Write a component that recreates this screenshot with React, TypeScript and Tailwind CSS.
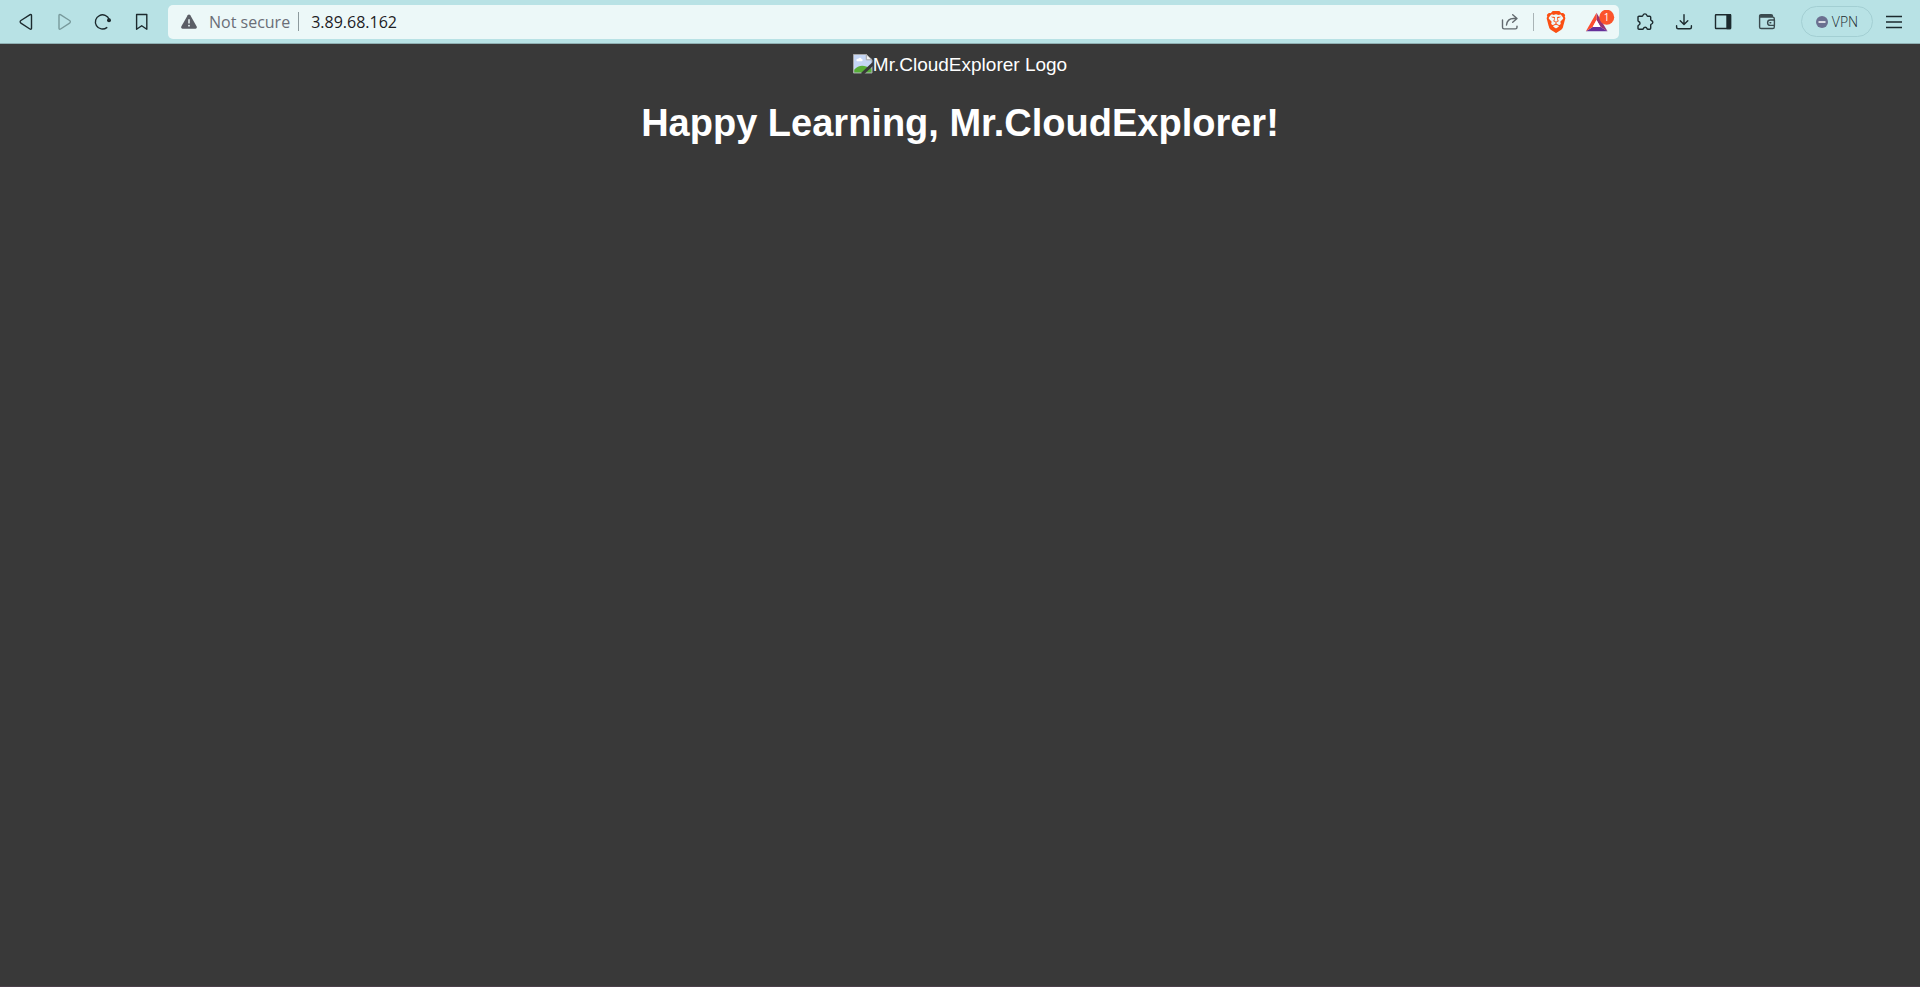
import type { ReactNode } from "react";
import { SiBrave } from "react-icons/si";

type ToolButtonProps = { label: string; className?: string; children: ReactNode };

function ToolButton({ label, className = "w-full", children }: ToolButtonProps) {
  return (
    <button type="button" aria-label={label} className={`flex h-8 items-center justify-center text-[#1c2a2e] ${className}`}>
      {children}
    </button>
  );
}

function Icon({ children, className = "" }: { children: ReactNode; className?: string }) {
  return (
    <svg
      viewBox="0 0 20 20"
      className={`h-5 w-5 ${className}`}
      fill="none"
      stroke="currentColor"
      strokeWidth="1.4"
      strokeLinecap="round"
      strokeLinejoin="round"
      aria-hidden="true"
    >
      {children}
    </svg>
  );
}

function Navigation() {
  return (
    <nav aria-label="Browser navigation" className="grid w-[154px] grid-cols-4">
      <ToolButton label="Back">
        <Icon>
          <path d="M14.1 2.6 4.9 8.5a1.6 1.6 0 0 0 0 2.7l9 5.8c.9.5 1.6.2 1.6-.8V3.4c0-.8-.6-1.2-1.4-.8Z" />
        </Icon>
      </ToolButton>
      <ToolButton label="Forward">
        <Icon className="text-[#789a9c]">
          <path d="M5.4 2.6 14.6 8.5a1.6 1.6 0 0 1 0 2.7l-9 5.8c-.9.5-1.6.2-1.6-.8V3.4c0-.8.6-1.2 1.4-.8Z" />
        </Icon>
      </ToolButton>
      <ToolButton label="Reload">
        <Icon>
          <path d="M13.8 15.6A7.1 7.1 0 1 1 16.2 7.6" />
          <circle cx="16" cy="8.2" r="2" fill="currentColor" stroke="none" />
        </Icon>
      </ToolButton>
      <ToolButton label="Bookmark this page">
        <Icon>
          <path d="M4.6 2.5h10.2v14.8l-5.1-3.6-5.1 3.6Z" />
        </Icon>
      </ToolButton>
    </nav>
  );
}

function AddressBar() {
  return (
    <div className="flex h-[34px] min-w-0 flex-1 items-center rounded-[5px] bg-[#ecf8f8] pl-3">
      <svg viewBox="0 0 18 18" className="h-[18px] w-[18px] shrink-0" aria-hidden="true">
        <path d="M7.7 2.2a1.5 1.5 0 0 1 2.6 0l6.4 11.4a1.5 1.5 0 0 1-1.3 2.2H2.6a1.5 1.5 0 0 1-1.3-2.2Z" fill="#5b5e66" />
        <path d="M9 6.2v4.4" stroke="#ecf8f8" strokeWidth="1.5" />
        <circle cx="9" cy="12.7" r=".9" fill="#ecf8f8" />
      </svg>
      <label htmlFor="address" className="ml-[11px] font-['Open_Sans',sans-serif] text-[16px] whitespace-nowrap text-[#6a6e77]">
        Not secure
      </label>
      <span className="ml-[8px] h-[19px] w-px shrink-0 bg-[#8d9a9d]" />
      <input
        id="address"
        type="text"
        defaultValue="3.89.68.162"
        className="ml-3 min-w-0 flex-1 bg-transparent font-['Open_Sans',sans-serif] text-[16px] text-[#1d2024] outline-none"
      />
      <button type="button" aria-label="Share this page" className="flex h-8 w-6 items-center justify-center">
        <Icon className="text-[#62696e]">
          <path d="M2.5 8v7.3c0 1 .6 1.6 1.6 1.6h11.3c1 0 1.6-.6 1.6-1.6v-1.2" />
          <path d="M12.7 2.8 17 6.5l-4.3 3.8M16.6 6.5h-3C9.6 6.5 7 9 6.5 13" />
        </Icon>
      </button>
      <span className="ml-[11px] h-[18px] w-px shrink-0 bg-[#a9b4b6]" />
      <button type="button" aria-label="Brave Shields" className="ml-2 flex h-8 w-8 items-center justify-center pr-1">
        <SiBrave className="h-[22px] w-[22px] text-[#fb4f13]" />
      </button>
      <button type="button" aria-label="Brave Rewards" className="ml-[11px] flex h-8 w-[34px] items-center">
        <svg viewBox="0 0 32 24" className="h-6 w-8" aria-hidden="true">
          <path d="M11.5 10V2.8L22.5 21.3 15.5 17Z" fill="#963273" />
          <path d="M.9 21.3 7.7 17h7.8l7 4.3Z" fill="#65309a" />
          <path d="M11.5 2.8.9 21.3l6.8-4.3 3.8-6.9Z" fill="#fb4d30" />
          <path d="M11.5 10 15.5 17H7.7Z" fill="#ffffff" />
          <circle cx="21.7" cy="7.2" r="7.5" fill="#fb542b" />
          <text x="21.7" y="10.8" textAnchor="middle" fill="#ffffff" className="font-['Open_Sans',sans-serif] text-[10px]">1</text>
        </svg>
      </button>
    </div>
  );
}

function Extensions() {
  return (
    <div className="flex shrink-0 items-center">
      <div className="grid w-[116px] grid-cols-3">
        <ToolButton label="Extensions">
          <Icon>
            <path d="M4 4.2h3.1c.5 0 .7-.3.8-.8.3-1 1-1.5 2-1.5s1.7.5 2 1.5c.1.5.3.8.8.8h2c.7 0 1 .4 1 1v2.3c0 .6.2.8.7 1 .9.3 1.4.9 1.4 1.8s-.5 1.5-1.4 1.8c-.5.1-.7.4-.7.9v3.3c0 .6-.4 1-1 1h-1.8c-.6 0-.8-.3-.9-.8-.3-.8-.9-1.3-1.8-1.3s-1.5.5-1.8 1.3c-.1.5-.4.8-.9.8H4c-.6 0-1-.4-1-1v-2.2c0-.5.2-.8.7-1 .9-.4 1.3-1 1.3-1.8s-.5-1.5-1.3-1.8c-.5-.2-.7-.5-.7-1V5.2c0-.6.4-1 1-1Z" />
          </Icon>
        </ToolButton>
        <ToolButton label="Downloads">
          <Icon>
            <path d="M10 2.6v9.8M6.2 8.8l3.8 3.7 3.8-3.7M2.6 13.8v1.5c0 .9.6 1.5 1.5 1.5h11.8c.9 0 1.5-.6 1.5-1.5v-1.5" />
          </Icon>
        </ToolButton>
        <ToolButton label="Sidebar">
          <Icon>
            <rect x="2.5" y="2.7" width="15" height="13.8" rx=".5" />
            <path d="M14 2.7h3.5v13.8H14Z" fill="currentColor" />
          </Icon>
        </ToolButton>
      </div>
      <ToolButton label="Wallet" className="ml-[6px] w-[38px]">
        <Icon className="text-[#3a4b4f]">
          <path d="M17.3 8V6.7c0-1-.6-1.6-1.6-1.6H3.7M15.5 5V4.1c0-.9-.6-1.4-1.4-1.4H4c-.8 0-1.4.6-1.4 1.4v10.8c0 1 .6 1.6 1.6 1.6h11.5c1 0 1.6-.6 1.6-1.6v-1.4M3.5 3.8h11" />
          <path d="M17.4 8h-4.1a2.7 2.7 0 0 0 0 5.4h4.1ZM13 10.7h.8" />
        </Icon>
      </ToolButton>
      <button
        type="button"
        className="ml-[15px] flex h-[31px] w-[72px] items-center justify-center gap-1 rounded-full border border-[#a3cfd3] font-['Open_Sans',sans-serif] text-[14px] font-light text-[#1c2a2e]"
      >
        <svg viewBox="0 0 12 12" className="h-3 w-3" aria-hidden="true">
          <circle cx="6" cy="6" r="6" fill="#6b7090" />
          <path d="M2.5 6h7" stroke="#ffffff" strokeWidth="1.5" />
        </svg>
        VPN
      </button>
      <ToolButton label="Menu" className="ml-1 w-[34px]">
        <Icon>
          <path d="M2 4.5h16M2 10h16M2 15.5h16" strokeLinecap="butt" />
        </Icon>
      </ToolButton>
    </div>
  );
}

function BrokenImage() {
  return (
    <svg viewBox="0 0 20 20" className="h-5 w-5 shrink-0" aria-hidden="true">
      <path d="M.5.5h12.8l5.7 5.3v13.2H.5Z" fill="#c5d6f5" stroke="#a6a6a6" />
      <path d="M4 7.2c-1.5-1.2 0-3 1.3-2.4.7-1.6 3-1.4 3.2.3 1.6.1 1.6 2.1.2 2.1Z" fill="#ffffff" />
      <path d="M1.2 18.4v-2.6c3.4-4.2 8.2-4.8 12-3.2l5.3 2v3.8Z" fill="#57ad37" />
      <path d="M13.3.5v5.3H19Z" fill="#f2f2f2" stroke="#a6a6a6" />
      <path d="M20.5 9.4 9 20.2" stroke="#393939" strokeWidth="3" />
    </svg>
  );
}

export default function App() {
  return (
    <div className="flex min-h-screen flex-col bg-[#393939]">
      <header className="flex h-11 shrink-0 items-center gap-[7px] border-b border-[#8fb0b3] bg-[#b8e2e5] pr-[9px] pl-[7px]">
        <Navigation />
        <AddressBar />
        <Extensions />
      </header>
      <main className="flex flex-1 flex-col items-center border-b border-[#4a3f49] px-[10px] pt-[10px] font-['Liberation_Sans',Arial,sans-serif] text-white">
        <div className="flex items-start text-[19px] leading-[22px]">
          <BrokenImage />
          <span>Mr.CloudExplorer Logo</span>
        </div>
        <h1 className="mt-6 text-center text-[38px] leading-[46px] font-bold">Happy Learning, Mr.CloudExplorer!</h1>
      </main>
    </div>
  );
}
